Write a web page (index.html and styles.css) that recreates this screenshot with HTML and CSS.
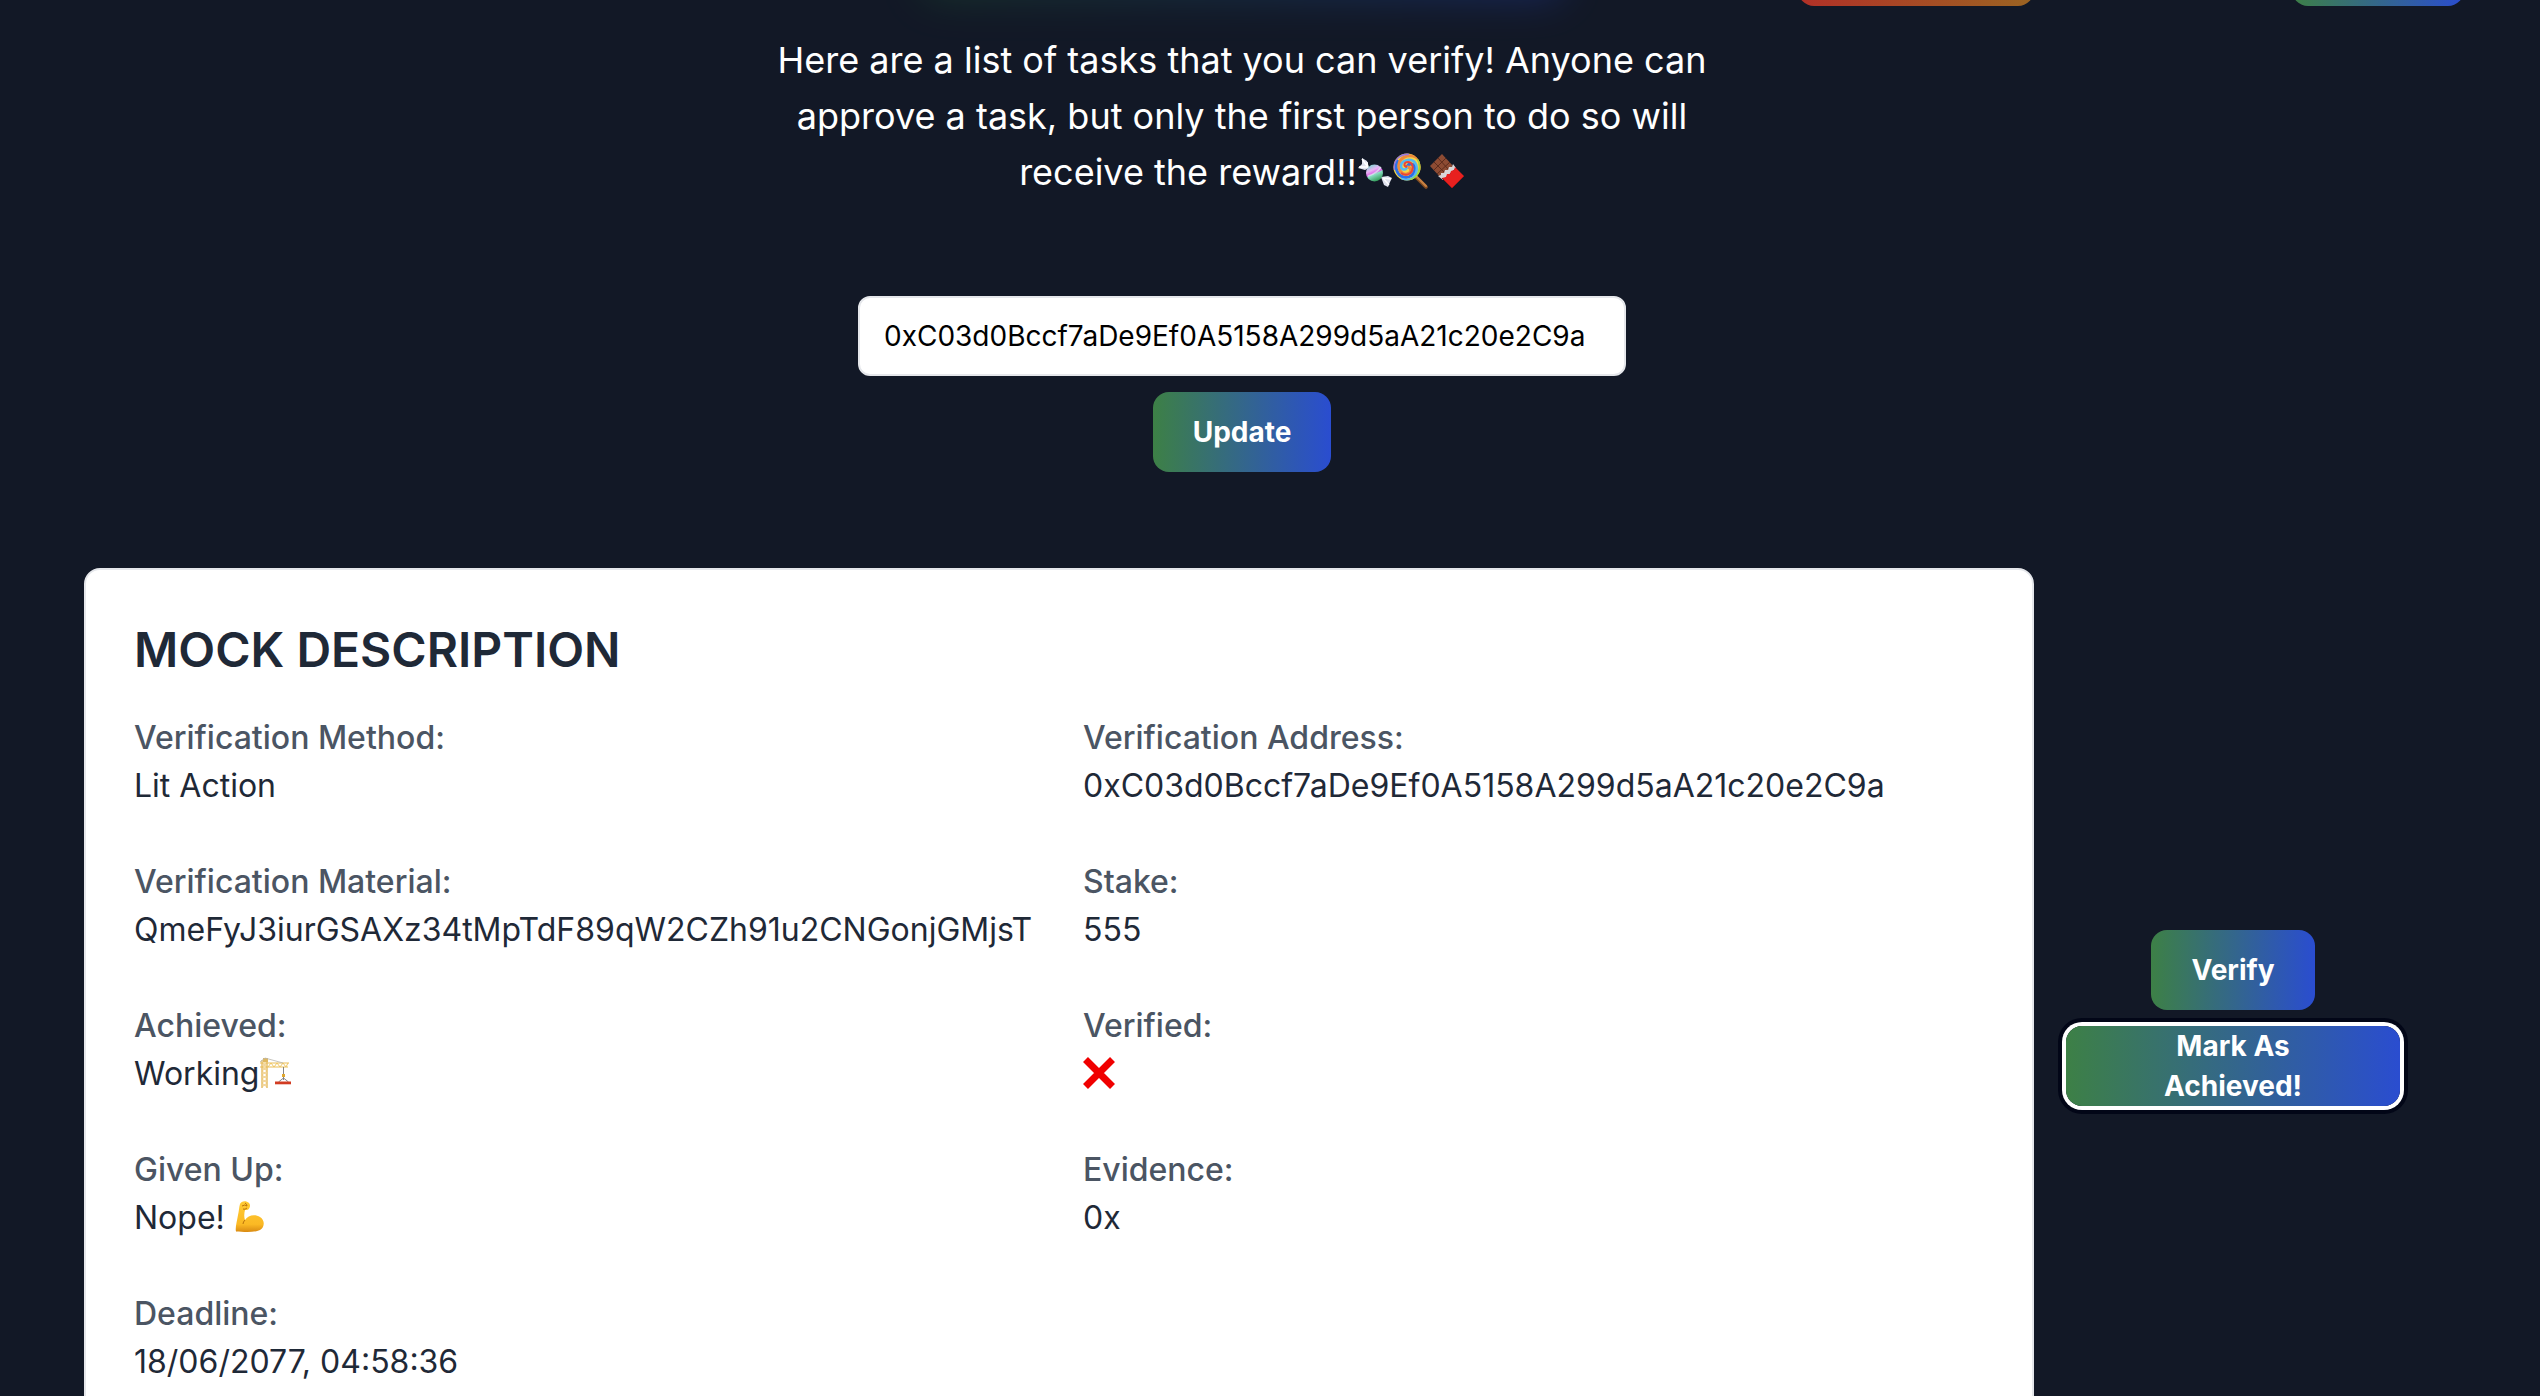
FILE: index.html
```html
<!DOCTYPE html>
<html lang="en">
<head>
<meta charset="utf-8">
<title>Verify tasks</title>
<link rel="stylesheet" href="styles.css">
</head>
<body>
<div class="page">
  <header class="topbar">
    <div class="glow"></div>
    <button type="button" class="btn btn-warm" aria-label="Network"></button>
    <button type="button" class="btn btn-account" aria-label="Account"></button>
  </header>

  <main class="content">
    <p class="intro">Here are a list of tasks that you can verify! Anyone can approve a task, but only the first person to do so will receive the reward!!<span class="sweets"><svg class="emoji" viewBox="0 0 36 36" role="img" aria-label="Candy">
        <defs>
          <linearGradient id="candy" x1="0.2" y1="0.1" x2="0.6" y2="1"><stop offset="0" stop-color="#8fd0d8"/><stop offset=".28" stop-color="#e9b4f5"/><stop offset=".5" stop-color="#dd62e8"/><stop offset=".56" stop-color="#8fe0c8"/><stop offset="1" stop-color="#2f9a55"/></linearGradient>
        </defs>
        <path d="M5 5l5 3 2 7-4 2-7-2 4-4z" fill="#dfe1ee"/><path d="M5 6l5 7M10 9l1 6M2 14l8 0" stroke="#fff" stroke-width="1.4"/>
        <path d="M24 24l7-1 4 2-2 4-2 5-4-2z" fill="#dfe1ee"/><path d="M26 25l6 7M26 25l8 1" stroke="#fff" stroke-width="1.4"/>
        <circle cx="17.500" cy="20" r="8.500" fill="url(#candy)"/>
        <path d="M11 23q8-2 13-9" stroke="#d8f7ee" stroke-width="1.500" fill="none" opacity=".7"/>
      </svg><svg class="emoji" viewBox="0 0 36 36" role="img" aria-label="Lollipop">
        <defs>
          <clipPath id="pop"><circle cx="14" cy="14" r="13.500"/></clipPath>
        </defs>
        <path d="M22 23l11 11" stroke="#7e4a22" stroke-width="3.600" stroke-linecap="round"/>
        <path d="M22 22l11 11" stroke="#c98142" stroke-width="2.200" stroke-linecap="round"/>
        <circle cx="14" cy="14" r="13.500" fill="#f4d84a"/>
        <g clip-path="url(#pop)" fill="none" stroke-width="3">
          <g transform="translate(14 14)">
            <path d="M0 0C2-5 8-3 8 2S2 12-4 10-13 0-9-7" stroke="#2d6fe8"/>
            <path d="M0 0C5 0 5 6 0 7S-9 3-8-3-1-12 6-11 14-3 13 4" stroke="#ef8a3a"/>
            <path d="M0 0C-1 4-6 3-6-1S-1-8 4-7 11 0 9 6 1 14-6 12" stroke="#54b8f2" stroke-width="2.500"/>
            <path d="M0 0C-4-1-3-5 1-5S7 0 5 4-2 9-6 6" stroke="#e8443a" stroke-width="2"/>
            <path d="M-13 3C-15-7-7-14 2-13" stroke="#9a78dc" stroke-width="2.500"/>
            <path d="M11-8C16 1 11 11 3 13" stroke="#9bd93c" stroke-width="2.500"/>
          </g>
        </g>
      </svg><svg class="emoji" viewBox="0 0 36 36" role="img" aria-label="Chocolate bar">
        <path d="M13 1l11 12-13 11L1 13z" fill="#8d4b33"/>
        <path d="M9 5l11 12M5 9l11 11M17 5L5 17M21 9L8 21" stroke="#5d2c1c" stroke-width="1"/>
        <path d="M24 11l3 4-13 12-5-4 3-1 0-2 3 0 1-3 3 0 1-3 3 0z" fill="#d9d6d8"/>
        <path d="M26 14l9 9-12 12-10-10 4-1 1-3 3 0 1-3 3-1z" fill="#e8201f"/>
        <path d="M35 23L23 35 13 25" stroke="#a51718" stroke-width="1" fill="none"/>
      </svg></span></p>

    <form class="lookup" onsubmit="return false">
      <input class="address" type="text" aria-label="Address" value="0xC03d0Bccf7aDe9Ef0A5158A299d5aA21c20e2C9a">
      <button type="submit" class="btn">Update</button>
    </form>

    <section class="task">
      <article class="card">
        <h2 class="card-title">MOCK DESCRIPTION</h2>
        <dl class="facts">
          <div><dt>Verification Method:</dt><dd>Lit Action</dd></div>
          <div><dt>Verification Address:</dt><dd>0xC03d0Bccf7aDe9Ef0A5158A299d5aA21c20e2C9a</dd></div>
          <div><dt>Verification Material:</dt><dd>QmeFyJ3iurGSAXz34tMpTdF89qW2CZh91u2CNGonjGMjsT</dd></div>
          <div><dt>Stake:</dt><dd>555</dd></div>
          <div><dt>Achieved:</dt><dd>Working<svg class="emoji" viewBox="0 0 32 32" role="img" aria-label="Crane" fill="none">
            <path d="M3 3v28M8 3v28" stroke="#e3bb62" stroke-width="1.400"/>
            <path d="M3 6l5 4-5 4 5 4-5 4 5 4-5 4M8 6l-5 4 5 4-5 4 5 4-5 4 5 4" stroke="#efc878" stroke-width="1"/>
            <path d="M1 6h29M1 10h28" stroke="#e9bd58" stroke-width="1.200"/>
            <path d="M9 10l3-4 3 4 3-4 3 4 3-4 3 4 2-4" stroke="#f0c660" stroke-width="1"/>
            <path d="M4 1h5v4H4z" fill="#dfb860"/>
            <path d="M1 5l5-4 18 5" stroke="#b9b6ae" stroke-width=".8"/>
            <path d="M24.500 10v13M24.500 21l-5 4M24.500 21l5 4" stroke="#77777a" stroke-width=".9"/>
            <path d="M23 17h3v3h-3z" fill="#e0a72e"/>
            <path d="M16 24.500h16v2.800H16z" fill="#d23c22"/>
          </svg></dd></div>
          <div><dt>Verified:</dt><dd><svg class="emoji" viewBox="0 0 32 32" role="img" aria-label="No">
            <path d="M2.500 2.500l27 27M29.500 2.500l-27 27" stroke="#f00000" stroke-width="7"/>
          </svg></dd></div>
          <div><dt>Given Up:</dt><dd>Nope! <svg class="emoji" viewBox="0 0 32 32" role="img" aria-label="Flexed arm">
            <defs><linearGradient id="skin" x1="0" y1="0" x2="0" y2="1"><stop offset="0" stop-color="#ffcb35"/><stop offset=".75" stop-color="#fbb924"/><stop offset="1" stop-color="#d98a12"/></linearGradient></defs>
            <path d="M6 3C7 0 12-1 15 2C17 4 16 8 13 9L11 9C10 13 10 16 11 19C14 14 21 13 26 16C31 19 31 26 26 29C20 32 9 31 2 30.500C1 27 3 20 4 14C5 10 5 6 6 3Z" fill="url(#skin)"/>
            <path d="M8 5q3-2 5 0M9 8q2 1 4-1M11 19q-2 2-2 4M11 2q2 1 2 3" stroke="#b9720c" stroke-width="1" fill="none"/>
          </svg></dd></div>
          <div><dt>Evidence:</dt><dd>0x</dd></div>
          <div><dt>Deadline:</dt><dd>18/06/2077, 04:58:36</dd></div>
        </dl>
      </article>
      <div class="actions">
        <button type="button" class="btn">Verify</button>
        <button type="button" class="btn btn-focused">Mark As Achieved!</button>
      </div>
    </section>
  </main>
</div>
</body>
</html>
```
FILE: styles.css
```css
* {
  box-sizing: border-box;
}

body {
  margin: 0;
  background: #121826;
  color: #fff;
  font-family: Inter, "Liberation Sans", sans-serif;
}

.page {
  height: 100vh;
  overflow: hidden;
}

/* The page is scrolled: only the lower edge of the bar shows. */
.topbar {
  position: relative;
  display: flex;
  justify-content: flex-end;
  align-items: flex-end;
  gap: 258px;
  height: 6px;
  padding-right: 76px;
}

.glow {
  position: absolute;
  left: calc(50% - 348px);
  bottom: 8px;
  width: 640px;
  height: 80px;
  border-radius: 16px;
  background: linear-gradient(to right, #1f5a30, #2340b4);
  filter: blur(20px);
  opacity: 0.4;
}

.btn {
  height: 80px;
  padding: 0 40px;
  border: 0;
  border-radius: 16px;
  background: linear-gradient(to right, #3d8046, #2a4dd0);
  color: #fff;
  font: 700 28px/40px Inter, "Liberation Sans", sans-serif;
}

.btn-warm {
  width: 236px;
  flex-shrink: 0;
  background: linear-gradient(to right, #b23027, #9b6422);
}

.btn-account {
  width: 172px;
  flex-shrink: 0;
}

.btn-focused {
  box-shadow: 0 0 0 4px #fff, 0 0 0 8px #020617;
}

.content {
  display: flex;
  flex-direction: column;
  align-items: center;
  padding: 26px 140px 0 84px;
}

.intro {
  max-width: 960px;
  margin: 0;
  font-size: 36px;
  line-height: 56px;
  text-align: center;
}

.sweets {
  white-space: nowrap;
}

.emoji {
  width: 1em;
  height: 1em;
  vertical-align: -4px;
}

.lookup {
  display: flex;
  flex-direction: column;
  align-items: center;
  gap: 16px;
  margin: 96px 0;
}

.address {
  width: 768px;
  height: 80px;
  padding: 0 24px;
  border: 2px solid #e5e7eb;
  border-radius: 12px;
  background: #fff;
  color: #000;
  font: 400 28px/40px Inter, "Liberation Sans", sans-serif;
}

.task {
  display: flex;
  align-items: center;
  gap: 32px;
  width: 100%;
}

.card {
  flex: 1;
  min-width: 0;
  padding: 48px 48px 80px;
  border: 2px solid #e5e7eb;
  border-radius: 16px;
  background: #fff;
  color: #1f2937;
}

.card-title {
  margin: 0 0 32px;
  font-size: 48px;
  line-height: 64px;
  font-weight: 600;
}

.facts {
  display: grid;
  grid-template-columns: repeat(2, minmax(0, 1fr));
  gap: 48px;
  margin: 0;
  font-size: 32px;
  line-height: 48px;
}

.facts dt {
  color: #4b5563;
  font-weight: 500;
}

.facts dd {
  height: 48px;
  margin: 0;
}

.actions {
  display: flex;
  flex-direction: column;
  align-items: center;
  gap: 16px;
  width: 334px;
}

.actions .btn-focused {
  width: 100%;
  padding: 0 80px;
}
```
